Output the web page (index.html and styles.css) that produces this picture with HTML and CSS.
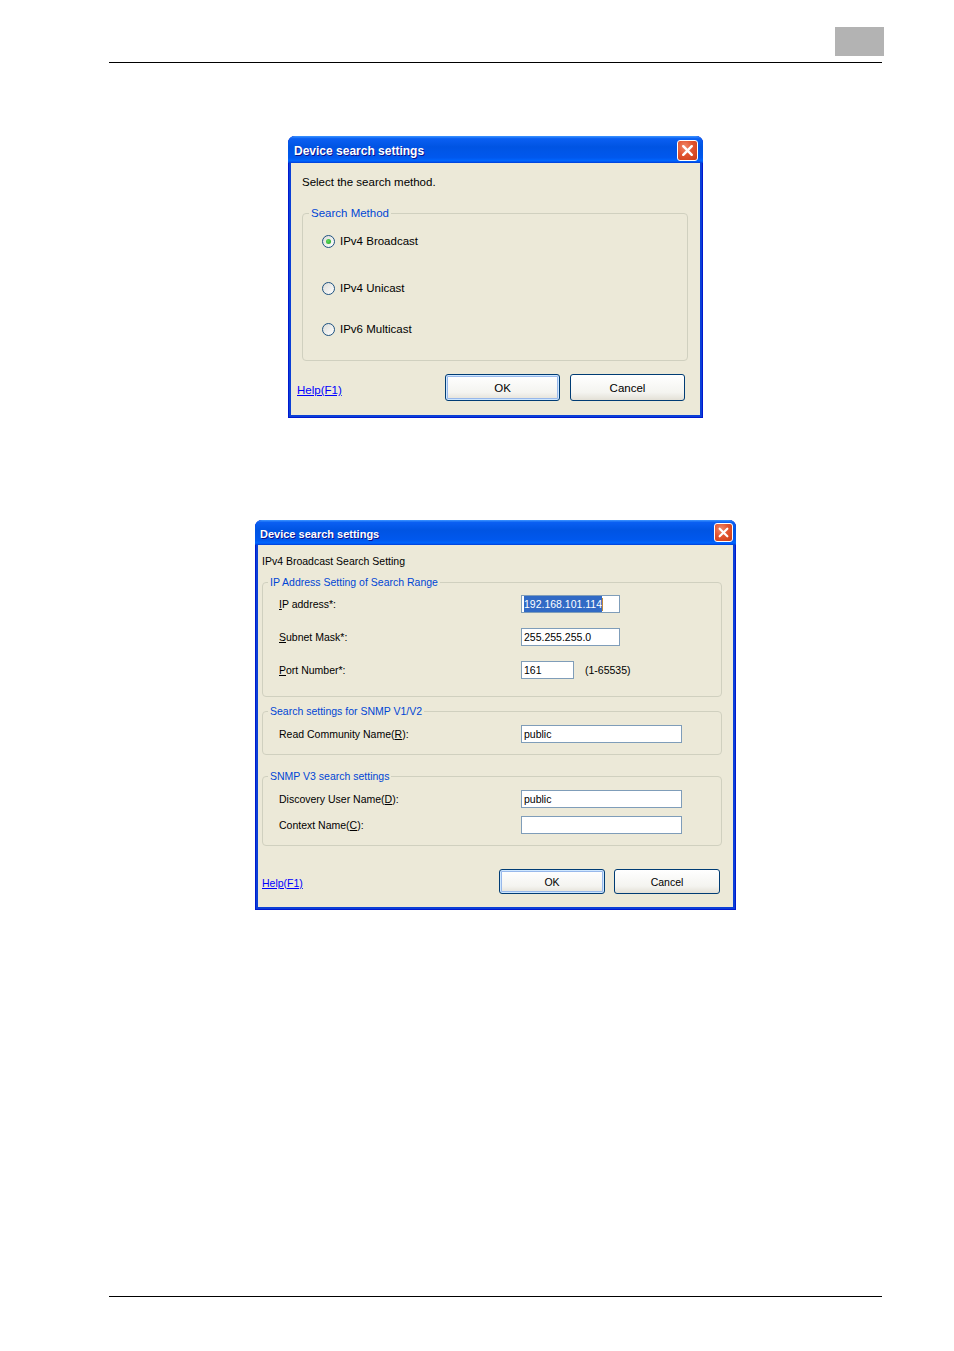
FILE: index.html
```html
<!DOCTYPE html>
<html lang="en">
<head>
  <meta charset="UTF-8">
  <title>Device search settings</title>
  <link rel="stylesheet" href="styles.css">
</head>
<body>
  <header class="page-head">
    <div class="page-tab"></div>
  </header>

  <div class="window win-method">
    <div class="titlebar">
      <span class="title">Device search settings</span>
      <span class="close-btn">
        <svg viewBox="0 0 20 20" width="100%" height="100%"><path d="M5.5 5.5 L14.5 14.5 M14.5 5.5 L5.5 14.5" stroke="#fff" stroke-width="2.6" stroke-linecap="round"/></svg>
      </span>
    </div>
    <div class="body">
      <div class="intro">Select the search method.</div>
      <fieldset class="group group-method">
        <legend>Search Method</legend>
        <div class="radio-row"><span class="radio checked"></span>IPv4 Broadcast</div>
        <div class="radio-row row-unicast"><span class="radio"></span>IPv4 Unicast</div>
        <div class="radio-row row-multicast"><span class="radio"></span>IPv6 Multicast</div>
      </fieldset>
      <div class="dlg-footer">
        <a class="help" href="#">Help(F1)</a>
        <div class="buttons">
          <button class="xp-btn default">OK</button>
          <button class="xp-btn">Cancel</button>
        </div>
      </div>
    </div>
  </div>

  <div class="window win-broadcast">
    <div class="titlebar">
      <span class="title">Device search settings</span>
      <span class="close-btn">
        <svg viewBox="0 0 20 20" width="100%" height="100%"><path d="M5.5 5.5 L14.5 14.5 M14.5 5.5 L5.5 14.5" stroke="#fff" stroke-width="2.6" stroke-linecap="round"/></svg>
      </span>
    </div>
    <div class="body">
      <div class="intro">IPv4 Broadcast Search Setting</div>

      <fieldset class="group group-range">
        <legend>IP Address Setting of Search Range</legend>
        <div class="form-row">
          <label><u>I</u>P address*:</label>
          <div class="field w-ip"><span class="selected">192.168.101.114</span><span class="caret"></span></div>
        </div>
        <div class="form-row">
          <label><u>S</u>ubnet Mask*:</label>
          <div class="field w-ip">255.255.255.0</div>
        </div>
        <div class="form-row">
          <label><u>P</u>ort Number*:</label>
          <div class="field w-port">161</div>
          <span class="hint">(1-65535)</span>
        </div>
      </fieldset>

      <fieldset class="group group-v2">
        <legend>Search settings for SNMP V1/V2</legend>
        <div class="form-row">
          <label>Read Community Name(<u>R</u>):</label>
          <div class="field w-long">public</div>
        </div>
      </fieldset>

      <fieldset class="group group-v3">
        <legend>SNMP V3 search settings</legend>
        <div class="form-row">
          <label>Discovery User Name(<u>D</u>):</label>
          <div class="field w-long">public</div>
        </div>
        <div class="form-row">
          <label>Context Name(<u>C</u>):</label>
          <div class="field w-long"></div>
        </div>
      </fieldset>

      <div class="dlg-footer">
        <a class="help" href="#">Help(F1)</a>
        <div class="buttons">
          <button class="xp-btn default">OK</button>
          <button class="xp-btn">Cancel</button>
        </div>
      </div>
    </div>
  </div>

  <footer class="page-foot"></footer>
</body>
</html>
```

FILE: styles.css
```css
body {
  margin: 0;
  background: #fff;
  font-family: 'Liberation Sans', Arial, sans-serif;
  color: #000;
}

/* page frame */
.page-head {
  box-sizing: border-box;
  width: 773px;
  height: 63px;
  margin-left: 109px;
  padding-top: 27px;
  border-bottom: 1px solid #000;
  display: flex;
  justify-content: flex-end;
}
.page-tab {
  width: 49px;
  height: 29px;
  margin-right: -2px;
  background: #b3b3b3;
}
.page-foot {
  width: 773px;
  margin: 386px 0 0 109px;
  border-top: 1px solid #000;
}

/* xp window */
.window {
  background: #0b3fd6;
  border-radius: 7px 7px 0 0;
  overflow: hidden;
  box-shadow: inset 1px 0 0 #0019cf, inset -1px 0 0 #0019cf, inset 0 -1px 0 #0019cf;
}
.titlebar {
  display: flex;
  align-items: center;
  justify-content: space-between;
  padding: 0 5px 0 6px;
  background: linear-gradient(#3d95ff 0%, #0a5ff2 10%, #0054e3 40%, #0058ee 80%, #0066ff 92%, #003dd7 100%);
}
.title {
  color: #fff;
  font-weight: bold;
  text-shadow: 1px 1px #0f1089;
}
.close-btn {
  box-sizing: border-box;
  border: 1px solid #fff;
  border-radius: 3px;
  background: radial-gradient(circle at 35% 30%, #f08a6b, #e2542f 45%, #c83c17);
}
.body {
  margin: 0 3px 3px;
  background: #ece9d8;
}

/* first dialog */
.win-method {
  width: 415px;
  margin: 73px 0 0 288px;
  font-size: 11.5px;
}
.win-method .titlebar { height: 27px; }
.win-method .title { font-size: 12px; margin-top: 3px; }
.win-method .close-btn { width: 21px; height: 21px; margin-top: 1px; }
.win-method .body { padding: 12px 12px 14px 11px; }
.win-method .intro { line-height: 14px; }

.group {
  margin: 0;
  border: 1px solid #d0d0bf;
  border-radius: 4px;
}
.group legend {
  color: #0046d5;
  padding: 0 2px;
}
.group-method {
  margin-top: 17px;
  padding: 14px 0 24px 19px;
}
.group-method legend {
  margin-left: -13px;
  line-height: 14px;
}
.radio-row {
  display: flex;
  align-items: center;
  gap: 5px;
  height: 14px;
}
.row-unicast { margin-top: 33px; }
.row-multicast { margin-top: 27px; }
.radio {
  box-sizing: border-box;
  width: 13px;
  height: 13px;
  border: 1px solid #1c5180;
  border-radius: 50%;
  background: linear-gradient(135deg, #dcdcd7, #fff);
  display: flex;
  align-items: center;
  justify-content: center;
}
.radio.checked::after {
  content: "";
  width: 5px;
  height: 5px;
  border-radius: 50%;
  background: radial-gradient(circle at 40% 40%, #5edc5e, #21a121);
}

.dlg-footer {
  display: flex;
  align-items: center;
}
.help {
  color: #0000ff;
  text-decoration: underline;
}
.buttons {
  margin-left: auto;
  display: flex;
}
.xp-btn {
  box-sizing: border-box;
  font-family: inherit;
  font-size: inherit;
  color: #000;
  border: 1px solid #003c74;
  border-radius: 3px;
  background: linear-gradient(#fff, #f4f4f0 70%, #e3e0d6);
  padding: 0;
}
.xp-btn.default {
  box-shadow: inset 0 0 0 1px #cee7ff, inset 0 0 0 2px #98b8ea;
}
.win-method .dlg-footer { margin-top: 13px; }
.win-method .help { margin: 5px 0 0 -5px; }
.win-method .buttons { gap: 10px; margin-right: 3px; }
.win-method .xp-btn { width: 115px; height: 27px; }

/* second dialog */
.win-broadcast {
  width: 481px;
  margin: 102px 0 0 255px;
  font-size: 10.5px;
}
.win-broadcast .titlebar { height: 25px; padding: 0 3px 0 5px; }
.win-broadcast .title { font-size: 11px; margin-top: 2px; }
.win-broadcast .close-btn { width: 19px; height: 19px; }
.win-broadcast .body { padding: 10px 11px 13px 4px; }
.win-broadcast .intro { line-height: 13px; }
.win-broadcast .group legend {
  margin-left: -11px;
  line-height: 13px;
}
.group-range {
  margin-top: 8px;
  padding: 6px 0 17px 16px;
}
.group-v2 {
  margin-top: 8px;
  padding: 7px 0 11px 16px;
}
.group-v3 {
  margin-top: 15px;
  padding: 7px 0 11px 16px;
}
.form-row {
  display: flex;
  align-items: center;
  height: 18px;
}
.group-range .form-row + .form-row { margin-top: 15px; }
.group-v3 .form-row + .form-row { margin-top: 8px; }
.form-row label {
  width: 242px;
  flex-shrink: 0;
}
.field {
  box-sizing: border-box;
  height: 18px;
  padding: 0 2px;
  border: 1px solid #7f9db9;
  background: #fff;
  line-height: 16px;
  display: flex;
  align-items: center;
}
.w-ip { width: 99px; }
.w-port { width: 53px; }
.w-long { width: 161px; }
.selected {
  background: #316ac5;
  color: #fff;
}
.caret {
  width: 1px;
  height: 13px;
  background: #c08a3a;
}
.hint { margin-left: 11px; }
.win-broadcast .dlg-footer { margin-top: 23px; }
.win-broadcast .help { margin-top: 2px; }
.win-broadcast .buttons { gap: 9px; margin-right: 2px; }
.win-broadcast .xp-btn { width: 106px; height: 25px; }
```
